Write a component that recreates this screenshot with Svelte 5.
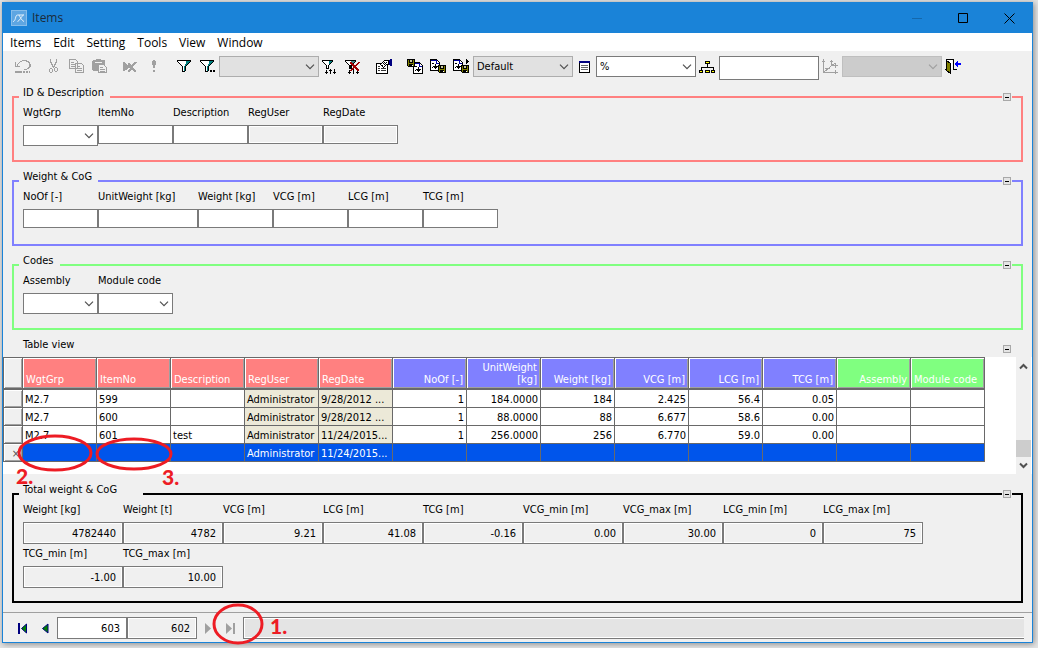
<script>
  const menus = ['Items', 'Edit', 'Setting', 'Tools', 'View', 'Window']

  const groups = [
    {
      title: 'ID & Description',
      color: 'red',
      fields: [
        { id: 'wgtGrp', label: 'WgtGrp', type: 'select' },
        { id: 'itemNo', label: 'ItemNo' },
        { id: 'description', label: 'Description' },
        { id: 'regUser', label: 'RegUser', readonly: true },
        { id: 'regDate', label: 'RegDate', readonly: true }
      ]
    },
    {
      title: 'Weight & CoG',
      color: 'blue',
      fields: [
        { id: 'noOf', label: 'NoOf [-]' },
        { id: 'unitWeight', label: 'UnitWeight [kg]', wide: true },
        { id: 'weight', label: 'Weight [kg]' },
        { id: 'vcg', label: 'VCG [m]' },
        { id: 'lcg', label: 'LCG [m]' },
        { id: 'tcg', label: 'TCG [m]' }
      ]
    },
    {
      title: 'Codes',
      color: 'green',
      fields: [
        { id: 'assembly', label: 'Assembly', type: 'select' },
        { id: 'moduleCode', label: 'Module code', type: 'select' }
      ]
    }
  ]

  const columns = [
    { label: 'WgtGrp', color: 'red' },
    { label: 'ItemNo', color: 'red' },
    { label: 'Description', color: 'red' },
    { label: 'RegUser', color: 'red', locked: true },
    { label: 'RegDate', color: 'red', locked: true },
    { label: 'NoOf [-]', color: 'blue', right: true },
    { label: 'UnitWeight [kg]', color: 'blue', right: true },
    { label: 'Weight [kg]', color: 'blue', right: true },
    { label: 'VCG [m]', color: 'blue', right: true },
    { label: 'LCG [m]', color: 'blue', right: true },
    { label: 'TCG [m]', color: 'blue', right: true },
    { label: 'Assembly', color: 'green', right: true },
    { label: 'Module code', color: 'green' }
  ]

  const rows = [
    ['M2.7', '599', '', 'Administrator', '9/28/2012 ...', '1', '184.0000', '184', '2.425', '56.4', '0.05', '', ''],
    ['M2.7', '600', '', 'Administrator', '9/28/2012 ...', '1', '88.0000', '88', '6.677', '58.6', '0.00', '', ''],
    ['M2.7', '601', 'test', 'Administrator', '11/24/2015...', '1', '256.0000', '256', '6.770', '59.0', '0.00', '', ''],
    ['', '', '', 'Administrator', '11/24/2015...', '', '', '', '', '', '', '', '']
  ]
  const selected = 3

  const totals = [
    { label: 'Weight [kg]', value: '4782440' },
    { label: 'Weight [t]', value: '4782' },
    { label: 'VCG [m]', value: '9.21' },
    { label: 'LCG [m]', value: '41.08' },
    { label: 'TCG [m]', value: '-0.16' },
    { label: 'VCG_min [m]', value: '0.00' },
    { label: 'VCG_max [m]', value: '30.00' },
    { label: 'LCG_min [m]', value: '0' },
    { label: 'LCG_max [m]', value: '75' },
    { label: 'TCG_min [m]', value: '-1.00' },
    { label: 'TCG_max [m]', value: '10.00' }
  ]
</script>

{#snippet chevron()}
  <svg class="chevron" width="10" height="6" viewBox="0 0 10 6"><path d="M1 .7l4 4 4-4" /></svg>
{/snippet}

{#snippet tool(name, icon, disabled = false)}
  <button class="tool" aria-label={name} {disabled}>
    <svg width="16" height="16" viewBox="0 0 16 16" shape-rendering="crispEdges">{@render icon()}</svg>
  </button>
{/snippet}

{#snippet collapse(name)}
  <button class="collapse" aria-label={`Collapse ${name}`}><span></span></button>
{/snippet}

{#snippet undo()}
  <path d="M2 6h1V5h1V4h1V3h2V2h5v1h2v1h1v2h1v3h-1v1h-1v1h-2v1H9v-1h3v-1h1V9h1V5h-1V4h-2V3H7v1H5v1H4v1H3v2H2z" fill="#a0a0a0" />
  <path d="M0 4h1v4h4v1H0zM0 13h7v2H0zM8 13h2v2H8zM11 13h2v2h-2zM14 13h1v2h-1z" fill="#a0a0a0" />
{/snippet}
{#snippet cut()}
  <path d="M4 1h1v3h1v2h1v2h1v2H7V9H6V7H5V5H4zM10 1h1v4h-1v2H9v2H8V6h1V4h1z" fill="#a0a0a0" />
  <path d="M4 10h2v1h1v3H6v1H4v-1H3v-3h1zM9 9h2v1h1v3h-1v1H9v-1H8v-3h1z" fill="#a0a0a0" />
  <path d="M4 11h2v3H4zM9 10h2v3H9z" fill="#f0f0f0" />
{/snippet}
{#snippet copy()}
  <path d="M.5 1.500h6l2 2v7h-8zM6.500 5.500h6l2 2v7h-8z" fill="#f0f0f0" stroke="#a0a0a0" />
  <path d="M2 4h3v1H2zM2 6h4v1H2zM2 8h4v1H2zM8 8h3v1H8zM8 10h5v1H8zM8 12h5v1H8z" fill="#a0a0a0" />
{/snippet}
{#snippet paste()}
  <path d="M1 2h3V1h5v1h3l1 1v10H1l-1-1V3z" fill="#a0a0a0" />
  <path d="M3 4h7v1H3z" fill="#f0f0f0" />
  <path d="M6.500 6.500h5l3 3v5h-8z" fill="#f0f0f0" stroke="#a0a0a0" />
  <path d="M8 9h3v1H8zM8 11h5v1H8zM8 13h5v1H8z" fill="#a0a0a0" />
{/snippet}
{#snippet remove()}
  <path d="M0 4h2v1h1v1h1v1h1V5h2v1h1v1h1V6h1V5h1V4h3v1h-1v1h-1v1h-1v1h-1v2h1v1h1v1h1v2h-2v-1h-1v-1h-1v-1H9v1H8v1H7v1H5v-2h1v-1h1v-1H5v1H4v1H2v1H0z" fill="#a0a0a0" />
{/snippet}
{#snippet apply()}
  <path d="M7 2h2v1h1v4H9v3H7V7H6V3h1zM7 12h2v2H7z" fill="#a0a0a0" />
{/snippet}
{#snippet funnel()}
  <path d="M0 2h14v2h-1v1h-1v1h-1v1h-1v1H9v5H8v1H5V8H4V7H3V6H2V5H1V4H0z" fill="#000" />
  <path d="M1 3h12v1h-1v1h-1v1h-1v1H9v1H8v5H6V8H5V7H4V6H3V5H2V4H1z" fill="#fff" />
  <path d="M9 3h4v1h-1v1h-1v1h-1v1H9v1H8v5H7V8h1V6h1z" fill="#008080" />
{/snippet}
{#snippet funnelDots()}
  {@render funnel()}
  <path d="M10 12h2v2h-2zM13 12h2v2h-2z" fill="#000" />
{/snippet}
{#snippet funnelSort()}
  <path d="M0 2h11v2h-1v1H9v1H8v1H7v4H4V7H3V6H2V5H1V4H0z" fill="#000" />
  <path d="M1 3h9v1H9v1H8v1H7v1H6v3H5V7H4V6H3V5H2V4H1z" fill="#fff" />
  <path d="M7 3h3v1H9v1H8v1H7z" fill="#008080" />
  <path d="M4 12h1v2h1v1H5v1H4v-1H3v-1h1zM8 11h1v1h1v1H9v3H8v-3H7v-1h1zM12 11h1v3h1v1h-1v1h-1v-1h-1v-1h1z" fill="#000" />
{/snippet}
{#snippet funnelClear()}
  <path d="M0 2h11v2h-1v1H9v1H8v1H7v4H4V7H3V6H2V5H1V4H0z" fill="#000" />
  <path d="M1 3h5v4H4V6H3V5H2V4H1z" fill="#fff" />
  <path d="M6 3h4v1H9v1H8v1H7v1H6z" fill="#408080" />
  <path d="M4 12h1v2h1v1H5v1H4v-1H3v-1h1zM8 11h1v5H8zM12 11h1v3h1v1h-1v1h-1v-1h-1v-1h1z" fill="#000" />
  <path d="M5 4h2v1h1v1h1v1h2V6h1V5h1V4h2v1h-1v1h-1v1h-1v1h-1v1h1v1h1v1h1v2h-2v-1h-1v-1h-1v-1H9v1H8v1H7v1H5v-1h1v-1h1v-1h1V8H7V7H6V6H5z" fill="#a00000" />
{/snippet}
{#snippet properties()}
  <path d="M.5 5.500h11v10H.5z" fill="#fff" stroke="#000" />
  <path d="M2 10h2v1H2zM5 10h5v1H5zM2 12h2v1H2zM5 12h5v1H5zM2 8h2v1H2z" fill="#333" />
  <path d="M4.500 6.500l4-4h4v4h-2l-3 3z" fill="#fff" stroke="#000" />
  <path d="M8 4h1v1H8zM10 4h1v1h-1zM7 5h1v1H7zM9 5h1v1H9zM8 6h1v1H8zM6 7h1v1H6z" fill="#000" />
  <path d="M13 2h1V1h2v7h-2V7h-1z" fill="#000080" />
{/snippet}
{#snippet floppy()}
  <path d="M0 0h8v8H1L0 7z" fill="#000" />
  <path d="M1 1h1v3h4V1h1v6H6V5H2v2H1z" fill="#808000" />
  <path d="M3 1h2v2H3z" fill="#c8c8a0" />
  <path d="M5 6h1v1H5z" fill="#fff" />
{/snippet}
{#snippet page()}
  <path d="M.5.500h6l3 3v8h-9z" fill="#fff" stroke="#000" />
  <path d="M1 1h5v1H1zM6 1h1v3h2v1H6z" fill="#0000a0" />
  <path d="M2 4h2v1H2zM2 8h1v1H2zM5 5h1v5H5zM4 8h3v1H4zM3 7h5v1H3z" fill="#000" />
{/snippet}
{#snippet saveAs()}
  <g transform="translate(6 4)">{@render page()}</g>
  <g transform="translate(0 1)">{@render floppy()}</g>
{/snippet}
{#snippet saveView()}
  <g transform="translate(0 1)">{@render page()}</g>
  <g transform="translate(8 7)">{@render floppy()}</g>
{/snippet}
{#snippet loadView()}
  {@render saveView()}
  <path d="M13 1h1v1h1v1h1v1h-1v1h-1v1h-1z" fill="#000" />
{/snippet}
{#snippet list()}
  <path d="M3.500 3.500h10v11h-10z" fill="#fff" stroke="#000" />
  <path d="M3 3h11v2H3z" fill="#000080" />
  <path d="M5 7h7v1H5zM5 9h7v1H5zM5 11h7v1H5z" fill="#666" />
{/snippet}
{#snippet tree()}
  <path d="M8.500 6v4M2.500 12V9.500h12V12" fill="none" stroke="#000" />
  <path d="M6.500 3.500h4v2h-4zM.5 12.500h3v2h-3zM6.500 12.500h4v2h-4zM12.500 12.500h3v2h-3z" fill="#ffff00" stroke="#000" />
{/snippet}
{#snippet axes()}
  <path d="M1.500 1v13.500H16M1.500 14.500l12-10M9.500 2v5.500H16M3 11l5-1M0 3.500h3M8 3.500h3M13.500 12v4M13.500 5v5" fill="none" stroke="#a0a0a0" />
{/snippet}
{#snippet exit()}
  <path d="M0 11h1V1h8v10h3v1H8V2H2v10H0z" fill="#000" />
  <path d="M3 2h4v9H5z" fill="#fff" />
  <path d="M1.500 2.500l4 3v10l-4-3z" fill="#808000" stroke="#000" />
  <path d="M10 5h1V4h1V3h1v2h3v2h-3v2h-1V8h-1V7h-1z" fill="#0000ff" />
{/snippet}

<div class="desktop">
  <main class="window">
    <header class="titleBar">
      <svg class="logo" width="16" height="16" viewBox="0 0 16 16">
        <rect x=".5" y=".5" width="15" height="15" fill="#5ea6e2" stroke="#86bdea" />
        <path d="M2 11.500c3 0 2-6.500 4.500-6.500H13M8 5c1 2 3 6 5 6.500M12.500 5C10 6 9 11 6.500 11.500" fill="none" stroke="#e4f2fc" />
      </svg>
      <h1>Items</h1>
      <div class="windowButtons">
        <button aria-label="Minimize" class="faint"><svg width="11" height="11" viewBox="0 0 11 11"><path d="M0 5.500h10" /></svg></button>
        <button aria-label="Maximize"><svg width="11" height="11" viewBox="0 0 11 11"><path d="M.5.500h9v9h-9z" /></svg></button>
        <button aria-label="Close"><svg width="11" height="11" viewBox="0 0 11 11"><path d="M.5.500l10 10M10.500.500l-10 10" /></svg></button>
      </div>
    </header>

    <nav class="menuBar">
      {#each menus as menu}
        <button>{menu}</button>
      {/each}
    </nav>

    <div class="toolbar">
      {@render tool('Undo', undo, true)}
      <i class="sep"></i>
      {@render tool('Cut', cut, true)}
      {@render tool('Copy', copy, true)}
      {@render tool('Paste', paste, true)}
      <i class="sep"></i>
      {@render tool('Delete', remove, true)}
      {@render tool('Apply', apply, true)}
      <i class="sep"></i>
      {@render tool('Filter', funnel)}
      {@render tool('Filter options', funnelDots)}
      <span class="combo gray"><select aria-label="Filter name"><option></option></select>{@render chevron()}</span>
      {@render tool('Sort filter', funnelSort)}
      {@render tool('Clear filter', funnelClear)}
      <i class="sep"></i>
      {@render tool('Properties', properties)}
      <i class="sep"></i>
      {@render tool('Save as', saveAs)}
      {@render tool('Save view', saveView)}
      {@render tool('Load view', loadView)}
      <span class="combo gray"><select aria-label="View"><option>Default</option></select>{@render chevron()}</span>
      {@render tool('List', list)}
      <span class="combo"><select aria-label="Unit"><option>%</option></select>{@render chevron()}</span>
      {@render tool('Tree', tree)}
      <input class="search" aria-label="Search" />
      {@render tool('Axes', axes, true)}
      <span class="combo off"><select aria-label="Axis system" disabled><option></option></select>{@render chevron()}</span>
      {@render tool('Exit', exit)}
    </div>

    <div class="content">
      {#each groups as group}
        <section class="group {group.color}">
          <h2>{group.title}</h2>
          {@render collapse(group.title)}
          <div class="fields">
            {#each group.fields as field}
              <div class="field" class:wide={field.wide}>
                <label for={field.id}>{field.label}</label>
                {#if field.type === 'select'}
                  <span class="combo"><select id={field.id}><option></option></select>{@render chevron()}</span>
                {:else}
                  <input id={field.id} readonly={field.readonly} />
                {/if}
              </div>
            {/each}
          </div>
        </section>
      {/each}
    </div>

    <section class="tableView">
      <div class="tableTitle">
        <h2>Table view</h2>
        {@render collapse('Table view')}
      </div>
      <div class="grid">
        <table>
          <colgroup>
            <col class="rowHeadCol" />
            {#each columns as column}<col />{/each}
          </colgroup>
          <thead>
            <tr>
              <th class="rowHead"></th>
              {#each columns as column}
                <th class={column.color} class:right={column.right}>{column.label}</th>
              {/each}
            </tr>
          </thead>
          <tbody>
            {#each rows as row, r}
              <tr class:selected={r === selected}>
                <th class="rowHead">{r === selected ? '×' : ''}</th>
                {#each row as cell, c}
                  <td class:right={columns[c].right} class:locked={columns[c].locked}>{cell}</td>
                {/each}
              </tr>
            {/each}
          </tbody>
        </table>
        <div class="scrollbar">
          <svg width="9" height="7" viewBox="0 0 9 7"><path d="M1 5.500l3.500-3.500L8 5.500" /></svg>
          <div class="thumb"></div>
          <svg width="9" height="7" viewBox="0 0 9 7"><path d="M1 1.500L4.500 5 8 1.500" /></svg>
        </div>
        <svg class="marks" width="190" height="60" viewBox="0 0 190 60">
          <ellipse cx="52" cy="23" rx="36" ry="17" />
          <ellipse cx="131" cy="24" rx="37" ry="15" />
          <text x="13" y="54">2.</text>
          <text x="159" y="55">3.</text>
        </svg>
      </div>
    </section>

    <div class="content">
      <section class="group black">
        <h2>Total weight &amp; CoG</h2>
        {@render collapse('Total weight & CoG')}
        <div class="fields">
          {#each totals as total, i}
            <div class="field wide total">
              <label for="total{i}">{total.label}</label>
              <input id="total{i}" value={total.value} readonly />
            </div>
          {/each}
        </div>
      </section>
    </div>

    <footer class="navigator">
      <button aria-label="First"><svg width="11" height="11" viewBox="0 0 11 11"><path d="M2 0v11" stroke="#000080" stroke-width="2" /><path d="M9.500 1v9L4.500 5.500z" fill="#008000" stroke="#000080" /></svg></button>
      <button aria-label="Previous"><svg width="11" height="11" viewBox="0 0 11 11"><path d="M8 1v9L2.500 5.500z" fill="#008000" stroke="#000080" /></svg></button>
      <input aria-label="Current record" value="603" />
      <input aria-label="Record count" value="602" readonly />
      <button aria-label="Next" disabled><svg width="11" height="11" viewBox="0 0 11 11"><path d="M2 0v11l6-5.500z" fill="#a0a0a0" /></svg></button>
      <button aria-label="Last" disabled><svg width="11" height="11" viewBox="0 0 11 11"><path d="M0 0v11l6-5.500zM7 0h2v11H7z" fill="#a0a0a0" /></svg></button>
      <div class="status"></div>
      <svg class="marks" width="90" height="44" viewBox="0 0 90 44">
        <ellipse cx="28" cy="22" rx="24" ry="19" />
        <text x="60" y="32">1.</text>
      </svg>
    </footer>
  </main>
</div>

<style>
  :global(body) {
    background: #e4e4e4;
  }

  .desktop {
    box-sizing: border-box;
    min-height: 100vh;
    padding: 2px 5px 5px 2px;
    display: flex;
    font-family: 'DejaVu Sans Condensed', 'DejaVu Sans', sans-serif;
    font-size: 11px;
    line-height: 14px;
    color: #000;
  }

  .window {
    position: relative;
    box-sizing: border-box;
    flex: 1;
    min-width: 0;
    display: flex;
    flex-direction: column;
    border: 1px solid #1a83d8;
    background: #f0f0f0;
    box-shadow: 1px 1px 6px rgba(0, 0, 0, 0.4);
  }

  button,
  input,
  select {
    box-sizing: border-box;
    margin: 0;
    font: inherit;
    color: inherit;
    border-radius: 0;
  }

  button {
    padding: 0;
    border: 0;
    background: none;
  }

  h1,
  h2 {
    margin: 0;
    font-size: inherit;
    font-weight: normal;
  }

  .titleBar {
    display: flex;
    align-items: center;
    height: 30px;
    padding-left: 8px;
    gap: 5px;
    background: #1a83d8;
    font-family: 'Open Sans', sans-serif;
    font-size: 12px;
    color: #1c2b3a;
  }

  .windowButtons {
    display: flex;
    margin-left: auto;
    height: 100%;
  }

  .windowButtons button {
    width: 46px;
    display: flex;
    align-items: center;
    justify-content: center;
  }

  .windowButtons path {
    fill: none;
    stroke: #000;
  }

  .windowButtons .faint path {
    stroke: #1468ac;
  }

  .menuBar {
    box-sizing: border-box;
    display: flex;
    gap: 12px;
    height: 18px;
    padding: 2px 0 0 7px;
    background: #fff;
    font-family: 'Open Sans', sans-serif;
    font-size: 12px;
  }

  .toolbar {
    display: flex;
    align-items: flex-start;
    padding: 5px 8px 0;
    height: 24px;
  }

  .tool {
    width: 23px;
    height: 20px;
    flex: none;
    padding-left: 4px;
    display: flex;
    align-items: center;
  }

  .combo ~ .tool {
    padding-left: 3px;
  }

  .tool svg {
    overflow: visible;
  }

  .sep {
    width: 8px;
    flex: none;
  }

  .combo {
    position: relative;
    display: block;
  }

  .toolbar .combo,
  .search {
    width: 100px;
    flex: none;
  }

  .combo select {
    appearance: none;
    display: block;
    width: 100%;
    height: 21px;
    padding: 0 16px 0 3px;
    border: 1px solid #7a7a7a;
    background: #fff;
    opacity: 1;
  }

  .combo.gray select {
    background: #e1e1e1;
    border-color: #adadad;
  }

  .combo.off select {
    background: #ccc;
    border-color: #bfbfbf;
  }

  .chevron {
    position: absolute;
    right: 4px;
    top: 8px;
    pointer-events: none;
    fill: none;
    stroke: #505050;
    stroke-width: 1.2;
  }

  .off .chevron {
    stroke: #a0a0a0;
  }

  input {
    border: 1px solid #7a7a7a;
    background: #fff;
    padding: 0 6px;
    outline: none;
  }

  input:read-only {
    background: #f0f0f0;
    box-shadow: inset 0 0 0 1px #fff;
  }

  .search {
    height: 24px;
  }

  .content {
    display: flex;
    flex-direction: column;
    gap: 18px;
    padding: 16px 9px 0;
  }

  .group {
    position: relative;
    box-sizing: border-box;
    min-height: 66px;
    padding: 8px 9px 13px;
    border: 2px solid #000;
  }

  .group.red {
    border-color: #ff8080;
  }

  .group.blue {
    border-color: #8080ff;
  }

  .group.green {
    border-color: #80ff80;
  }

  .group h2 {
    position: absolute;
    top: -12px;
    left: 5px;
    padding: 0 6px 0 4px;
    background: #f0f0f0;
  }

  .group.black h2 {
    padding-right: 26px;
  }

  .collapse {
    width: 8px;
    height: 8px;
    display: flex;
    align-items: center;
    justify-content: center;
    border: 1px solid #a8a8a8;
    background: #e4e4e4;
    box-shadow: 0 0 0 1px #f0f0f0;
  }

  .collapse span {
    width: 4px;
    height: 1px;
    background: #000;
  }

  .group .collapse {
    position: absolute;
    top: -5px;
    right: 10px;
  }

  .fields {
    display: flex;
    flex-wrap: wrap;
    row-gap: 3px;
  }

  .field {
    width: 75px;
    display: flex;
    flex-direction: column;
    gap: 5px;
  }

  .field.wide {
    width: 100px;
  }

  .field label {
    white-space: nowrap;
  }

  .field input {
    width: 100%;
    height: 19px;
  }

  .total input {
    height: 22px;
    text-align: right;
  }

  .tableTitle {
    display: flex;
    align-items: center;
    justify-content: space-between;
    padding: 7px 21px 4px 20px;
  }

  .tableTitle .collapse {
    margin-top: 8px;
  }

  .grid {
    position: relative;
    display: flex;
    justify-content: space-between;
    height: 117px;
    padding-right: 1px;
    background: #fff;
  }

  table {
    table-layout: fixed;
    width: 982px;
    flex: none;
    align-self: flex-start;
    border-collapse: separate;
    border-spacing: 0;
    border: solid #696969;
    border-width: 1px 0 0 1px;
  }

  col {
    width: 74px;
  }

  .rowHeadCol {
    width: 19px;
  }

  th,
  td {
    box-sizing: border-box;
    height: 18px;
    padding: 2px 2px 0;
    border: solid #696969;
    border-width: 0 1px 1px 0;
    text-align: left;
    font-weight: normal;
    white-space: nowrap;
    overflow: hidden;
  }

  thead th {
    height: 32px;
    padding: 3px 3px 2px;
    border-bottom-width: 2px;
    vertical-align: bottom;
    line-height: 12px;
    white-space: normal;
    color: #fff;
    box-shadow: inset 1px 1px #fff, inset -1px -1px #a0a0a0;
  }

  thead .red {
    background: #ff8080;
  }

  thead .blue {
    background: #8080ff;
  }

  thead .green {
    background: #80ff80;
  }

  .right {
    text-align: right;
  }

  .rowHead {
    background: #f0f0f0;
    text-align: right;
    color: #555;
    box-shadow: inset 1px 1px #fff, inset -1px -1px #a0a0a0;
  }

  .locked {
    background: #ece9d8;
  }

  .selected td {
    background: #0055eb;
    color: #fff;
  }

  .scrollbar {
    width: 15px;
    box-sizing: border-box;
    display: flex;
    flex-direction: column;
    align-items: center;
    padding: 6px 0 5px;
    background: #f0f0f0;
  }

  .scrollbar path {
    fill: none;
    stroke: #505050;
    stroke-width: 2;
  }

  .thumb {
    width: 100%;
    height: 17px;
    margin: auto 0 5px;
    background: #cdcdcd;
  }

  .marks {
    position: absolute;
    z-index: 2;
    pointer-events: none;
  }

  .grid .marks {
    left: 0;
    top: 73px;
  }

  .navigator .marks {
    left: 207px;
    bottom: -4px;
  }

  .marks ellipse {
    fill: none;
    stroke: #ed1c24;
    stroke-width: 3;
  }

  .marks text {
    font: 900 21px Lato, sans-serif;
    fill: #ed1c24;
  }

  .tableView + .content {
    padding-top: 19px;
  }

  .navigator {
    position: relative;
    display: flex;
    margin-top: auto;
    padding: 4px 8px 3px 8px;
    border-top: 1px solid #a0a0a0;
  }

  .navigator button {
    width: 23px;
    height: 22px;
    display: flex;
    align-items: center;
    justify-content: center;
  }

  .navigator input {
    width: 70px;
    height: 22px;
    text-align: right;
  }

  .status {
    flex: 1;
    border: 1px solid #7a7a7a;
    border-right: 0;
    background: #e4e4e4;
    box-shadow: inset 1px 1px #fff, inset 0 -1px #fff;
  }
</style>
